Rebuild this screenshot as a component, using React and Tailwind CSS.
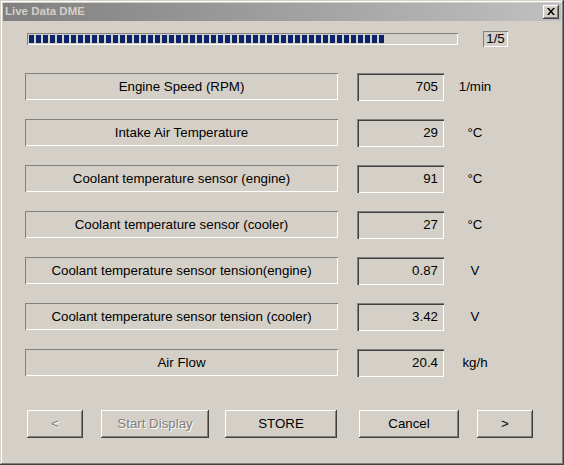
import React from 'react';

const rows = [
    { label: 'Engine Speed (RPM)', value: '705', unit: '1/min' },
    { label: 'Intake Air Temperature', value: '29', unit: '°C' },
    { label: 'Coolant temperature sensor (engine)', value: '91', unit: '°C' },
    { label: 'Coolant temperature sensor (cooler)', value: '27', unit: '°C' },
    { label: 'Coolant temperature sensor tension(engine)', value: '0.87', unit: 'V' },
    { label: 'Coolant temperature sensor tension (cooler)', value: '3.42', unit: 'V' },
    { label: 'Air Flow', value: '20.4', unit: 'kg/h' },
];

const raised = 'shadow-[inset_-1px_-1px_#404040,inset_1px_1px_#ffffff,inset_-2px_-2px_#808080,inset_2px_2px_#d4d0c8]';

const Button = ({ children, width, disabled, className = '' }) => (
    <button
        className={`h-[28px] flex items-center justify-center bg-[#d4d0c8] ${raised} ${width} ${className} ${
            disabled ? 'text-[#808080] [text-shadow:1px_1px_0_#ffffff]' : 'text-black'
        }`}
    >
        {children}
    </button>
);

const App = () => {
    return (
        <div className="w-[564px] h-[465px] flex flex-col p-[3px] bg-[#d4d0c8] text-[13.3px] text-black font-['Liberation_Sans',Arial,sans-serif] shadow-[inset_-1px_-1px_#404040,inset_1px_1px_#d4d0c8,inset_-2px_-2px_#808080,inset_2px_2px_#ffffff]">
            {/* Title bar */}
            <div className="h-[18px] flex items-center justify-between pl-[2px] pr-[2px] bg-linear-to-r from-[#808080] to-[#c0c0c0]">
                <span className="text-[11.5px] font-bold text-[#d4d0c8] leading-none">Live Data DME</span>
                <button className={`w-[16px] h-[14px] flex items-center justify-center bg-[#d4d0c8] ${raised}`}>
                    <svg width="8" height="7" viewBox="0 0 8 7" className="-mt-px">
                        <path d="M0 0h2l2 2.5L6 0h2L5 3.5 8 7H6L4 4.5 2 7H0l3-3.5z" fill="#000" />
                    </svg>
                </button>
            </div>

            {/* Progress */}
            <div className="mt-[10px] h-[16px] flex items-center pl-[24px]">
                <div className="w-[431px] h-[12px] flex items-center gap-[2px] px-[2px] shadow-[inset_1px_1px_#808080,inset_-1px_-1px_#ffffff]">
                    {[...Array(51)].map((_, i) => (
                        <div key={i} className="w-[5px] h-[8px] bg-[#0a246a]"></div>
                    ))}
                </div>
                <div className="ml-[25px] w-[25px] h-[16px] flex items-center justify-center shadow-[inset_1px_1px_#808080,inset_-1px_-1px_#ffffff]">
                    1/5
                </div>
            </div>

            {/* Values */}
            <div className="mt-[26px] flex flex-col gap-[18px] pl-[22px]">
                {rows.map((r) => (
                    <div key={r.label} className="h-[28px] flex items-start">
                        <div className="w-[313px] h-[27px] flex items-center justify-center pt-px shadow-[inset_1px_1px_#808080,inset_-1px_-1px_#ffffff]">
                            {r.label}
                        </div>
                        <div className="ml-[19px] w-[87px] h-[28px] flex items-center justify-end pr-[6px] shadow-[inset_1px_1px_#808080,inset_2px_2px_#404040,inset_-1px_-1px_#ffffff,inset_-2px_-2px_#d4d0c8]">
                            {r.value}
                        </div>
                        <div className="ml-[8px] w-[46px] h-[28px] flex items-center justify-center">{r.unit}</div>
                    </div>
                ))}
            </div>

            {/* Buttons */}
            <div className="mt-[33px] flex items-center pl-[24px]">
                <Button width="w-[56px]" disabled>&lt;</Button>
                <Button width="w-[108px]" disabled className="ml-[18px]">Start Display</Button>
                <Button width="w-[112px]" className="ml-[16px]">STORE</Button>
                <Button width="w-[100px]" className="ml-[22px]">Cancel</Button>
                <Button width="w-[56px]" className="ml-[18px]">&gt;</Button>
            </div>
        </div>
    );
};

export default App;
